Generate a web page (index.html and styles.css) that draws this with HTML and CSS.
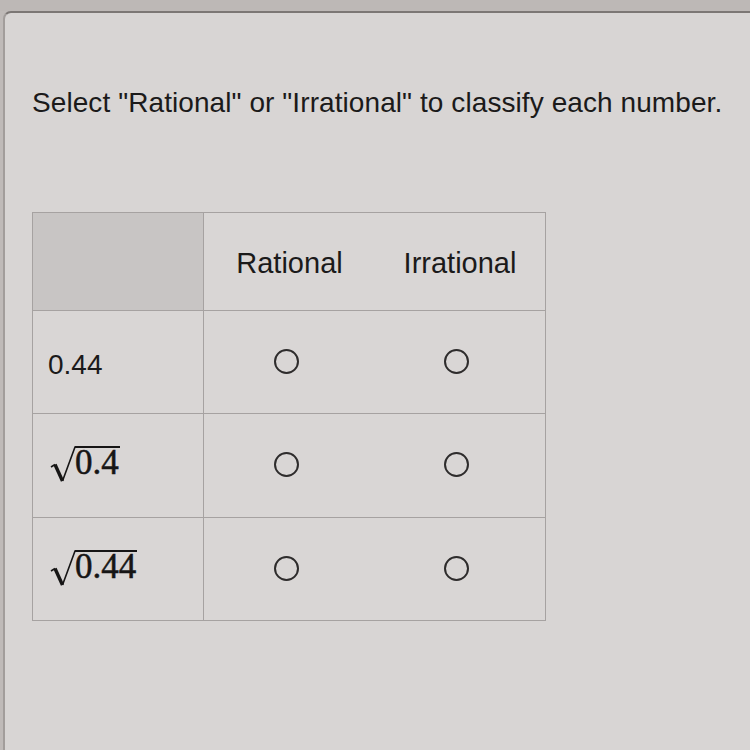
FILE: index.html
```html
<!DOCTYPE html>
<html>
<head>
<meta charset="utf-8">
<link rel="stylesheet" href="styles.css">
</head>
<body>
<div class="topbar"></div>
<div class="panel">
  <p class="prompt">Select "Rational" or "Irrational" to classify each number.</p>
  <div class="grid">
    <div class="cell head corner"></div>
    <div class="cell head label">Rational</div>
    <div class="cell head label">Irrational</div>

    <div class="cell row first"><span class="num">0.44</span></div>
    <div class="cell row opt"><span class="radio"></span></div>
    <div class="cell row opt"><span class="radio"></span></div>

    <div class="cell row first"><span class="math"><svg class="rad" width="26" height="37" viewBox="0 0 26 37"><path d="M1 21 L5 18.5" stroke="#161515" stroke-width="1.6" fill="none"/><path d="M5 18.5 L12.5 35" stroke="#161515" stroke-width="3.4" fill="none"/><path d="M12.5 35 L25 1 L26 1" stroke="#161515" stroke-width="1.6" fill="none"/></svg><span class="under">0.4</span></span></div>
    <div class="cell row opt"><span class="radio"></span></div>
    <div class="cell row opt"><span class="radio"></span></div>

    <div class="cell row first"><span class="math"><svg class="rad" width="26" height="37" viewBox="0 0 26 37"><path d="M1 21 L5 18.5" stroke="#161515" stroke-width="1.6" fill="none"/><path d="M5 18.5 L12.5 35" stroke="#161515" stroke-width="3.4" fill="none"/><path d="M12.5 35 L25 1 L26 1" stroke="#161515" stroke-width="1.6" fill="none"/></svg><span class="under">0.44</span></span></div>
    <div class="cell row opt"><span class="radio"></span></div>
    <div class="cell row opt"><span class="radio"></span></div>
  </div>
</div>
</body>
</html>
```

FILE: styles.css
```css
html, body {
  margin: 0;
  padding: 0;
  background: #bfbab8;
}
body {
  width: 750px;
  height: 750px;
  overflow: hidden;
  font-family: "Liberation Sans", Arial, sans-serif;
  color: #1b1a1a;
}
.topbar {
  height: 11px;
  background: #bdb8b6;
}
.panel {
  margin-left: 3px;
  height: 760px;
  background: #d8d5d4;
  border-top: 2px solid #7c7775;
  border-left: 2px solid #a29d9b;
  border-top-left-radius: 8px;
  padding: 74px 0 0 27px;
  box-sizing: border-box;
}
.prompt {
  margin: 0;
  font-size: 28px;
  line-height: 32px;
  letter-spacing: 0.08px;
  white-space: nowrap;
}
.grid {
  margin-top: 93px;
  width: 514px;
  box-sizing: border-box;
  border: 1px solid #a6a2a1;
  display: grid;
  grid-template-columns: 171px 171px 170px;
  grid-template-rows: 97px 103px 104px 103px;
  background: #d9d6d5;
}
.cell {
  display: flex;
  align-items: center;
  box-sizing: border-box;
}
.corner {
  background: #c8c5c4;
  border-right: 1px solid #a6a2a1;
}
.head.label {
  justify-content: center;
  font-size: 29px;
  line-height: 32px;
  padding-top: 2px;
}
.row {
  border-top: 1px solid #a6a2a1;
}
.first {
  border-right: 1px solid #a6a2a1;
  padding-left: 15px;
}
.num {
  font-size: 28px;
  line-height: 32px;
  padding-top: 6px;
}
.opt {
  justify-content: center;
  padding-right: 7px;
}
.radio {
  width: 25px;
  height: 25px;
  border: 2px solid #2e2c2c;
  border-radius: 50%;
  box-sizing: border-box;
  margin-top: -2px;
}
.math {
  font-family: "Liberation Serif", "Times New Roman", serif;
  font-size: 35px;
  display: inline-flex;
  align-items: flex-start;
  margin-top: -2px;
  margin-left: 2px;
  color: #161515;
  -webkit-text-stroke: 0.5px #161515;
}
.rad {
  display: block;
  margin-right: -1px;
}
.under {
  border-top: 2px solid #161515;
  line-height: 30px;
  padding-right: 1px;
}
```
